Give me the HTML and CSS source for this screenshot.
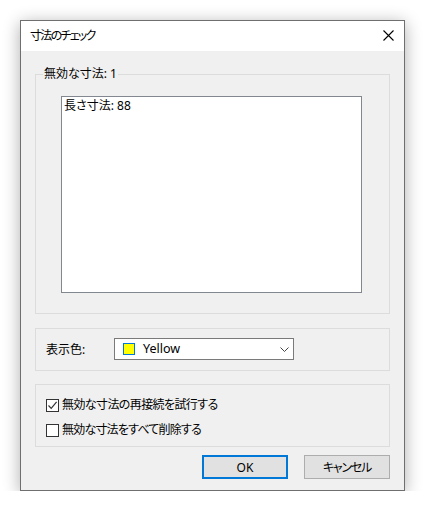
FILE: index.html
```html
<!DOCTYPE html>
<html lang="ja">
<head>
<meta charset="utf-8">
<title>寸法のチェック</title>
<link rel="stylesheet" href="styles.css">
</head>
<body>
<div class="dialog">
  <div class="titlebar">
    <span class="title">寸法のチェック</span>
    <svg class="close" width="11" height="11" viewBox="0 0 11 11"><path d="M0.5 0.5 L10.5 10.5 M10.5 0.5 L0.5 10.5" stroke="#000" stroke-width="1.1" fill="none"/></svg>
  </div>
  <div class="content">
    <fieldset class="group group-invalid">
      <legend class="legend">無効な寸法: 1</legend>
      <div class="listbox">
        <div class="list-item">長さ寸法: 88</div>
      </div>
    </fieldset>
    <div class="group group-color">
      <span class="color-label">表示色:</span>
      <div class="combo">
        <span class="swatch"></span>
        <span class="combo-text">Yellow</span>
        <svg class="chevron" width="9" height="5" viewBox="0 0 9 5"><path d="M0.5 0.5 L4.5 4.5 L8.5 0.5" stroke="#444" stroke-width="1" fill="none"/></svg>
      </div>
    </div>
    <div class="group group-checks">
      <label class="check-row">
        <span class="checkbox checked"><svg width="11" height="11" viewBox="0 0 11 11"><path d="M1.5 5.5 L4.2 8.3 L9.6 1.8" stroke="#333" stroke-width="1.2" fill="none"/></svg></span>
        <span class="check-text">無効な寸法の再接続を試行する</span>
      </label>
      <label class="check-row">
        <span class="checkbox"></span>
        <span class="check-text check-text-2">無効な寸法をすべて削除する</span>
      </label>
    </div>
    <div class="buttons">
      <button class="btn btn-default">OK</button>
      <button class="btn btn-cancel">キャンセル</button>
    </div>
  </div>
</div>
</body>
</html>
```
FILE: styles.css
```css
html, body {
  margin: 0;
  padding: 0;
  background: #ffffff;
}
body {
  font-family: "Noto Sans", "Noto Sans CJK JP", sans-serif;
  font-size: 12px;
  color: #000;
}
.title, .legend, .list-item, .color-label, .check-text, .btn {
  font-family: "Noto Sans", "Noto Sans CJK JP", sans-serif;
  font-feature-settings: "palt";
}
.dialog {
  margin: 20px 0 0 20px;
  width: 383px;
  height: 469px;
  border: 1px solid #6f6f6f;
  box-shadow: 0 3px 16px rgba(0, 0, 0, 0.32);
  background: #f0f0f0;
  display: flex;
  flex-direction: column;
}
.titlebar {
  height: 30px;
  background: #ffffff;
  display: flex;
  align-items: center;
  justify-content: space-between;
  padding: 0 10px 0 9px;
  flex: none;
}
.title {
  font-size: 12px;
  line-height: 16px;
  letter-spacing: -1.7px;
}
.close {
  display: block;
  margin-top: -1px;
}
.content {
  padding: 15px 14px 0 14px;
  display: flex;
  flex-direction: column;
}
.group {
  border: 1px solid #dcdcdc;
  margin: 0;
  box-sizing: border-box;
}
.group-invalid {
  padding: 0 0 20px 25px;
  min-width: 0;
}
.legend {
  margin-left: -18px;
  padding: 0 1px;
  font-size: 12px;
  line-height: 16px;
}
.listbox {
  margin-top: 14px;
  width: 301px;
  height: 197px;
  box-sizing: border-box;
  border: 1px solid #828790;
  background: #ffffff;
  padding: 1px 2px;
}
.list-item {
  font-size: 12px;
  line-height: 16px;
}
.group-color {
  margin-top: 14px;
  height: 43px;
  display: flex;
  align-items: center;
  padding: 0 0 0 10px;
}
.color-label {
  width: 68px;
  font-size: 12px;
  line-height: 16px;
}
.combo {
  width: 180px;
  height: 22px;
  box-sizing: border-box;
  border: 1px solid #7a7a7a;
  background: #ffffff;
  display: flex;
  align-items: center;
  padding: 0 4px 0 8px;
  margin-top: -1px;
}
.swatch {
  width: 12px;
  height: 12px;
  box-sizing: border-box;
  border: 1px solid #0078d7;
  background: #ffff00;
  flex: none;
}
.combo-text {
  margin-left: 8px;
  flex: 1;
  font-family: "Noto Sans", sans-serif;
  font-size: 12.5px;
  line-height: 16px;
}
.chevron {
  display: block;
}
.group-checks {
  margin-top: 13px;
  height: 63px;
  padding: 13px 0 0 10px;
  display: flex;
  flex-direction: column;
  gap: 11px;
}
.check-row {
  display: flex;
  align-items: center;
  height: 14px;
}
.checkbox {
  width: 13px;
  height: 13px;
  box-sizing: border-box;
  border: 1px solid #333333;
  background: #ffffff;
  display: flex;
  align-items: center;
  justify-content: center;
  flex: none;
}
.checkbox svg {
  display: block;
}
.check-text {
  margin-left: 3px;
  font-size: 12px;
  line-height: 16px;
  letter-spacing: -0.6px;
}
.check-text-2 {
  letter-spacing: -0.8px;
}
.buttons {
  display: flex;
  justify-content: flex-end;
  gap: 16px;
  margin-top: 8px;
}
.btn {
  width: 86px;
  height: 24px;
  box-sizing: border-box;
  background: #e1e1e1;
  border: 1px solid #adadad;
  font-size: 12px;
  color: #000;
  padding: 0;
  margin: 0;
}
.btn-cancel {
  letter-spacing: -1.2px;
}
.btn-default {
  border: 2px solid #0078d7;
}
```
